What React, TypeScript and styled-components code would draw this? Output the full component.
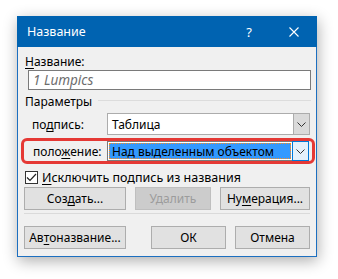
import React from "react";
import styled, { createGlobalStyle } from "styled-components";

const Global = createGlobalStyle`
  html, body { margin: 0; padding: 0; background: #ffffff; }
  body { width: 338px; height: 279px; overflow: hidden; font-family: "Noto Sans", "Open Sans", sans-serif; }
`;

const Page = styled.div`
  display: flex;
  padding: 16px 0 0 17px;
`;

const Dialog = styled.div`
  width: 298px;
  border: 1px solid #1c6fc0;
  border-top: none;
  background: #f0f0f0;
  box-shadow: 1px 4px 14px rgba(0, 0, 0, 0.32);
  display: flex;
  flex-direction: column;
`;

const TitleBar = styled.div`
  height: 31px;
  margin: 0 -1px;
  background: #0063b1;
  color: #ffffff;
  display: flex;
  align-items: center;
  padding: 0 0 0 10px;
  font-size: 12.5px;
`;

const TitleText = styled.div`
  flex: 1;
`;

const TitleButton = styled.div<{ $w: number }>`
  width: ${(p) => p.$w}px;
  height: 31px;
  display: flex;
  align-items: center;
  justify-content: center;
  font-size: 13px;
`;

const Body = styled.div`
  display: flex;
  flex-direction: column;
  padding: 7px 5px 7px 6px;
  font-size: 12px;
  color: #000;
`;

const Label = styled.div`
  height: 16px;
  line-height: 16px;
  padding-left: 1px;
`;

const U = styled.span`
  text-decoration: underline;
  text-underline-offset: 2px;
`;

const TextInput = styled.div`
  margin-left: 4px;
  height: 18px;
  border: 1px solid #7a7a7a;
  background: #fff;
  display: flex;
  align-items: center;
  padding-left: 4px;
  font-style: italic;
  color: #6d6d6d;
  font-size: 13.5px;
`;

const GroupHeader = styled.div`
  margin-top: 3px;
  height: 16px;
  display: flex;
  align-items: center;
  gap: 6px;
  padding-left: 1px;
`;

const GroupLine = styled.div`
  flex: 1;
  height: 1px;
  background: #dcdcdc;
  margin-top: -2px;
`;

const FieldRow = styled.div<{ $mt: number }>`
  margin-top: ${(p) => p.$mt}px;
  display: flex;
  align-items: center;
`;

const FieldLabel = styled.div`
  width: 83px;
  padding-left: 8px;
  box-sizing: border-box;
`;

const Highlight = styled.div`
  margin: 3px -4px 0 -3px;
  border: 3px solid #e53935;
  border-radius: 6px;
  height: 20px;
  display: flex;
  align-items: center;
  padding: 0 3px 0 0;
`;

const HighlightLabel = styled.div`
  width: 83px;
  padding-left: 9px;
  box-sizing: border-box;
`;

const Combo = styled.div<{ $focus?: boolean; $h: number }>`
  flex: 1;
  height: ${(p) => p.$h}px;
  border: 1px solid ${(p) => (p.$focus ? "#7a7a7a" : "#acacac")};
  background: #fff;
  display: flex;
  box-sizing: border-box;
`;

const ComboValue = styled.div`
  flex: 1;
  display: flex;
  align-items: center;
  padding-left: 4px;
`;

const Selected = styled.div`
  flex: 1;
  margin: 1px;
  background: #3399ff;
  outline: 1px dotted #ff8c1a;
  outline-offset: -1px;
  display: flex;
  align-items: center;
  padding-left: 3px;
  color: #000;
`;

const ComboButton = styled.div<{ $focus?: boolean }>`
  width: 15px;
  display: flex;
  align-items: center;
  justify-content: center;
  background: ${(p) => (p.$focus ? "#e5f1fb" : "#dadada")};
  border-left: 1px solid ${(p) => (p.$focus ? "#0078d7" : "#acacac")};
  ${(p) => (p.$focus ? "border: 1px solid #0078d7; margin: -1px -1px -1px 0;" : "")}
`;

const CheckRow = styled.div`
  margin-top: 7px;
  display: flex;
  align-items: center;
  gap: 4px;
  height: 13px;
  padding-left: 1px;
`;

const CheckBox = styled.div`
  width: 11px;
  height: 11px;
  border: 1px solid #333;
  background: #fff;
  display: flex;
  align-items: center;
  justify-content: center;
`;

const CheckLabel = styled.span`
  font-size: 12.5px;
`;

const ButtonRow = styled.div<{ $mt: number }>`
  margin-top: ${(p) => p.$mt}px;
  display: flex;
  height: 23px;
`;

const Button = styled.div<{ $w: number; $disabled?: boolean; $ml?: number }>`
  width: ${(p) => p.$w}px;
  margin-left: ${(p) => p.$ml ?? 0}px;
  box-sizing: border-box;
  border: 1px solid ${(p) => (p.$disabled ? "#bfbfbf" : "#adadad")};
  background: ${(p) => (p.$disabled ? "#cccccc" : "#e1e1e1")};
  color: ${(p) => (p.$disabled ? "#9c9c9c" : "#000")};
  display: flex;
  align-items: center;
  justify-content: center;
`;

const Separator = styled.div`
  margin-top: 3px;
  height: 1px;
  background: #dadada;
  margin-right: 1px;
`;

const Chevron = () => (
  <svg width="9" height="5" viewBox="0 0 9 5">
    <path d="M0.5 0.5 L4.5 4.5 L8.5 0.5" fill="none" stroke="#333" strokeWidth="1" />
  </svg>
);

export default function App() {
  return (
    <>
      <Global />
      <Page>
        <Dialog>
          <TitleBar>
            <TitleText>Название</TitleText>
            <TitleButton $w={44}>?</TitleButton>
            <TitleButton $w={46}>
              <svg width="10" height="10" viewBox="0 0 10 10">
                <path d="M0.5 0.5 L9.5 9.5 M9.5 0.5 L0.5 9.5" stroke="#fff" strokeWidth="1.1" />
              </svg>
            </TitleButton>
          </TitleBar>
          <Body>
            <Label>
              <U>Н</U>азвание:
            </Label>
            <TextInput>1 Lumpics</TextInput>
            <GroupHeader>
              Параметры
              <GroupLine />
            </GroupHeader>
            <FieldRow $mt={4}>
              <FieldLabel>
                по<U>д</U>пись:
              </FieldLabel>
              <Combo $h={22} style={{ marginRight: 1 }}>
                <ComboValue>Таблица</ComboValue>
                <ComboButton>
                  <Chevron />
                </ComboButton>
              </Combo>
            </FieldRow>
            <Highlight>
              <HighlightLabel>
                поло<U>ж</U>ение:
              </HighlightLabel>
              <Combo $h={20} $focus>
                <Selected>Над выделенным объектом</Selected>
                <ComboButton $focus>
                  <Chevron />
                </ComboButton>
              </Combo>
            </Highlight>
            <CheckRow>
              <CheckBox>
                <svg width="11" height="9" viewBox="0 0 11 9">
                  <path d="M1 4.5 L4 7.5 L10 1" fill="none" stroke="#222" strokeWidth="1.2" />
                </svg>
              </CheckBox>
              <CheckLabel>
                <U>И</U>сключить подпись из названия
              </CheckLabel>
            </CheckRow>
            <ButtonRow $mt={3}>
              <Button $w={102}>
                Соз<U>д</U>ать...
              </Button>
              <Button $w={76} $ml={9} $disabled>
                Удалить
              </Button>
              <Button $w={90} $ml={9}>
                Ну<U>м</U>ерация...
              </Button>
            </ButtonRow>
            <Separator />
            <ButtonRow $mt={12}>
              <Button $w={102}>
                Ав<U>т</U>оназвание...
              </Button>
              <Button $w={75} $ml={25}>
                ОК
              </Button>
              <Button $w={75} $ml={9}>
                Отмена
              </Button>
            </ButtonRow>
          </Body>
        </Dialog>
      </Page>
    </>
  );
}
